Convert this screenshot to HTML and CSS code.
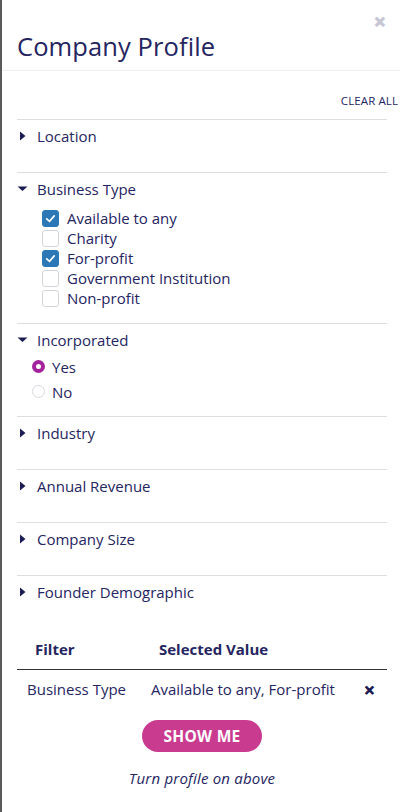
FILE: index.html
```html
<!DOCTYPE html>
<html lang="en">
<head>
<meta charset="utf-8">
<title>Company Profile</title>
<link rel="stylesheet" href="styles.css">
</head>
<body>
<div class="panel">
  <header class="head">
    <h1 class="title">Company Profile</h1>
    <span class="close">&#x2715;</span>
  </header>
  <main class="content">
    <div class="clear-row"><span class="clear">CLEAR ALL</span></div>

    <section class="sec">
      <div class="sec-head"><svg class="tri" viewBox="0 0 12 12"><polygon points="3,1.5 8.5,6 3,10.5"/></svg><span>Location</span></div>
    </section>

    <section class="sec open">
      <div class="sec-head"><svg class="tri" viewBox="0 0 12 12"><polygon points="0.5,3.5 10.5,3.5 5.5,8"/></svg><span>Business Type</span></div>
      <ul class="checks">
        <li><span class="cb on"><svg viewBox="0 0 16 16"><polyline points="4,8.3 7,11 12,5.2"/></svg></span>Available to any</li>
        <li><span class="cb"></span>Charity</li>
        <li><span class="cb on"><svg viewBox="0 0 16 16"><polyline points="4,8.3 7,11 12,5.2"/></svg></span>For-profit</li>
        <li><span class="cb"></span>Government Institution</li>
        <li><span class="cb"></span>Non-profit</li>
      </ul>
    </section>

    <section class="sec open radios-sec">
      <div class="sec-head"><svg class="tri" viewBox="0 0 12 12"><polygon points="0.5,3.5 10.5,3.5 5.5,8"/></svg><span>Incorporated</span></div>
      <ul class="radios">
        <li><span class="rb on"></span>Yes</li>
        <li><span class="rb"></span>No</li>
      </ul>
    </section>

    <section class="sec">
      <div class="sec-head"><svg class="tri" viewBox="0 0 12 12"><polygon points="3,1.5 8.5,6 3,10.5"/></svg><span>Industry</span></div>
    </section>
    <section class="sec">
      <div class="sec-head"><svg class="tri" viewBox="0 0 12 12"><polygon points="3,1.5 8.5,6 3,10.5"/></svg><span>Annual Revenue</span></div>
    </section>
    <section class="sec">
      <div class="sec-head"><svg class="tri" viewBox="0 0 12 12"><polygon points="3,1.5 8.5,6 3,10.5"/></svg><span>Company Size</span></div>
    </section>
    <section class="sec last">
      <div class="sec-head"><svg class="tri" viewBox="0 0 12 12"><polygon points="3,1.5 8.5,6 3,10.5"/></svg><span>Founder Demographic</span></div>
    </section>

    <div class="table">
      <div class="th c1">Filter</div>
      <div class="th c2">Selected Value</div>
      <div class="th c3"></div>
      <div class="td c1">Business Type</div>
      <div class="td c2">Available to any, For-profit</div>
      <div class="td c3"><span class="remove">&#x2715;</span></div>
    </div>

    <div class="actions">
      <button class="show">SHOW ME</button>
      <p class="hint">Turn profile on above</p>
    </div>
  </main>
</div>
</body>
</html>
```
FILE: styles.css
```css
* { box-sizing: border-box; }
html, body { margin: 0; padding: 0; background: #fff; }
body {
  font-family: "Open Sans", "Liberation Sans", sans-serif;
  color: #25255f;
}
.panel {
  position: relative;
  width: 400px;
  min-height: 812px;
  border-left: 2px solid #5a5a5a;
}
.head {
  position: relative;
  height: 71px;
  border-bottom: 1px solid #eeeef0;
  padding: 30px 0 0 15px;
}
.title {
  margin: 0;
  font-size: 25.5px;
  font-weight: 400;
  line-height: 32px;
  color: #25255f;
  letter-spacing: 0.1px;
}
.close {
  position: absolute;
  top: 14px;
  right: 14px;
  font-size: 14px;
  font-weight: 700;
  color: #c6c6d4;
  line-height: 16px;
  -webkit-text-stroke: 1px #c6c6d4;
}
.content {
  padding: 0 13px 0 15px;
}
.clear-row {
  display: flex;
  justify-content: flex-end;
  margin-right: -11px;
  padding-top: 22px;
  height: 48px;
}
.clear {
  font-size: 11.5px;
  line-height: 16px;
  color: #25255f;
  letter-spacing: 0.1px;
}
.sec {
  border-top: 1px solid #dedee2;
  padding: 6px 0 26px;
}
.sec.open { padding-bottom: 15px; }
.sec.radios-sec { padding-bottom: 12px; }
.sec.last { padding-bottom: 26px; }
.sec-head {
  display: flex;
  align-items: center;
  height: 20px;
  font-size: 15px;
  line-height: 20px;
}
.tri {
  width: 12px;
  height: 12px;
  fill: #1d1d55;
  margin: 0 8px 0 0;
  flex: none;
}
.checks, .radios {
  list-style: none;
  margin: 0;
  padding: 0;
}
.checks { margin-top: 9px; padding-left: 25px; }
.checks li {
  display: flex;
  align-items: center;
  height: 20px;
  font-size: 15px;
  line-height: 20px;
}
.cb {
  width: 17px;
  height: 17px;
  border: 1px solid #d4d4da;
  border-radius: 3px;
  margin-right: 8px;
  flex: none;
  background: #fff;
}
.cb.on {
  background: #2c78b6;
  border-color: #2c78b6;
}
.cb svg {
  display: block;
  width: 15px;
  height: 15px;
  fill: none;
  stroke: #fff;
  stroke-width: 1.8;
  stroke-linecap: round;
  stroke-linejoin: round;
}
.radios { margin-top: 4px; padding-left: 15px; }
.radios li {
  display: flex;
  align-items: center;
  height: 25px;
  font-size: 15px;
  line-height: 20px;
}
.rb {
  width: 13px;
  height: 13px;
  border-radius: 50%;
  border: 1px solid #d8d8de;
  margin-right: 7px;
  flex: none;
}
.rb.on {
  border: 4px solid #a4239d;
  background: #fff;
}
.table {
  display: grid;
  grid-template-columns: 124px 206px 1fr;
}
.th {
  font-weight: 700;
  font-size: 15px;
  line-height: 20px;
  padding: 11px 0 10px 18px;
  border-bottom: 1.5px solid #333;
}
.td {
  font-size: 15px;
  line-height: 20px;
  padding: 9px 0 9px 10px;
}
.td.c3 { padding-left: 17px; }
.remove {
  font-size: 13px;
  font-weight: 700;
  color: #1d1d55;
  -webkit-text-stroke: 0.6px #1d1d55;
}
.actions {
  display: flex;
  flex-direction: column;
  align-items: center;
  padding-top: 11px;
}
.show {
  width: 120px;
  height: 32px;
  border: none;
  border-radius: 16px;
  background: #c93b8f;
  color: #fff;
  font-family: inherit;
  font-weight: 700;
  font-size: 15.5px;
  letter-spacing: 0.3px;
  padding: 0;
}
.hint {
  margin: 16px 0 0;
  font-style: italic;
  font-size: 15px;
  line-height: 20px;
  letter-spacing: 0.2px;
}
```
